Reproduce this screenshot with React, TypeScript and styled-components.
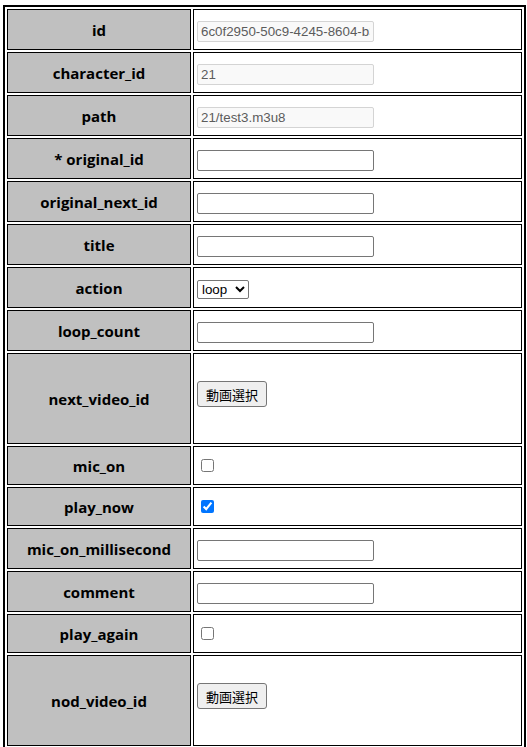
import React from "react";
import styled, { createGlobalStyle } from "styled-components";

const GlobalStyle = createGlobalStyle`
  html, body {
    background: #ffffff;
  }
  body {
    margin: 5px 0 0 3px;
    font-family: "Open Sans", "Noto Sans", sans-serif;
    color: #000;
  }
`;

const Table = styled.table`
  width: 523px;
  table-layout: fixed;
  border: 2px solid #000;
  border-collapse: separate;
  border-spacing: 2px;
`;

const Row = styled.tr<{ $h: number }>`
  height: ${(p) => p.$h}px;
`;

const Label = styled.th`
  width: 176px;
  padding: 0 3px;
  border: 1px solid #000;
  background: #c0c0c0;
  font-family: "Open Sans", "Noto Sans", sans-serif;
  font-weight: 700;
  font-size: 15px;
  text-align: center;
  vertical-align: middle;
  color: #000;
`;

const Field = styled.td<{ $top: number }>`
  padding: ${(p) => p.$top}px 3px 0;
  border: 1px solid #000;
  vertical-align: top;
  background: #fff;
`;

const TextInput = styled.input`
  display: block;
  box-sizing: border-box;
  width: 177px;
  height: 21px;
  margin: 0;
  padding: 1px 3px;
  font-family: "Liberation Sans", Arial, sans-serif;
  font-size: 13.333px;
  color: #000;
  background: #fff;
  border: 1px solid #767676;
  border-radius: 2px;
  outline: none;

  &:disabled {
    background: #f9f9f9;
    border-color: #d4d4d4;
    color: #5c5c5c;
  }
`;

const Select = styled.select`
  display: block;
  box-sizing: border-box;
  width: 52px;
  height: 19px;
  margin: 0;
  font-family: "Liberation Sans", Arial, sans-serif;
  font-size: 13.333px;
  color: #000;
  background: #fff;
  border: 1px solid #767676;
  border-radius: 2px;
`;

const Check = styled.input`
  display: block;
  width: 13px;
  height: 13px;
  margin: 3px 3px 3px 4px;
`;

const PickButton = styled.button`
  display: block;
  box-sizing: border-box;
  height: 26px;
  margin: 0;
  padding: 0 8px;
  font-family: "Noto Sans CJK JP", "Noto Sans CJK SC", sans-serif;
  font-size: 13px;
  color: #000;
  background: #efefef;
  border: 1px solid #767676;
  border-radius: 3px;
`;

type Kind = "readonly" | "text" | "select" | "check" | "checked" | "video";

interface FieldDef {
  label: string;
  kind: Kind;
  value?: string;
}

const fields: FieldDef[] = [
  { label: "id", kind: "readonly", value: "6c0f2950-50c9-4245-8604-b3e1a7d9c2f0" },
  { label: "character_id", kind: "readonly", value: "21" },
  { label: "path", kind: "readonly", value: "21/test3.m3u8" },
  { label: "* original_id", kind: "text" },
  { label: "original_next_id", kind: "text" },
  { label: "title", kind: "text" },
  { label: "action", kind: "select" },
  { label: "loop_count", kind: "text" },
  { label: "next_video_id", kind: "video" },
  { label: "mic_on", kind: "check" },
  { label: "play_now", kind: "checked" },
  { label: "mic_on_millisecond", kind: "text" },
  { label: "comment", kind: "text" },
  { label: "play_again", kind: "check" },
  { label: "nod_video_id", kind: "video" },
];

const layout: Record<Kind, { h: number; top: number }> = {
  readonly: { h: 41, top: 11 },
  text: { h: 41, top: 11 },
  select: { h: 41, top: 12 },
  check: { h: 39, top: 9 },
  checked: { h: 39, top: 9 },
  video: { h: 91, top: 27 },
};

function Control({ f }: { f: FieldDef }) {
  switch (f.kind) {
    case "readonly":
      return <TextInput type="text" disabled defaultValue={f.value} />;
    case "text":
      return <TextInput type="text" />;
    case "select":
      return (
        <Select defaultValue="loop">
          <option value="loop">loop</option>
          <option value="once">once</option>
        </Select>
      );
    case "check":
      return <Check type="checkbox" />;
    case "checked":
      return <Check type="checkbox" defaultChecked />;
    case "video":
      return <PickButton type="button">動画選択</PickButton>;
  }
}

export default function App() {
  return (
    <>
      <GlobalStyle />
      <Table>
        <tbody>
          {fields.map((f) => (
            <Row key={f.label} $h={layout[f.kind].h}>
              <Label>{f.label}</Label>
              <Field $top={layout[f.kind].top}>
                <Control f={f} />
              </Field>
            </Row>
          ))}
        </tbody>
      </Table>
    </>
  );
}
